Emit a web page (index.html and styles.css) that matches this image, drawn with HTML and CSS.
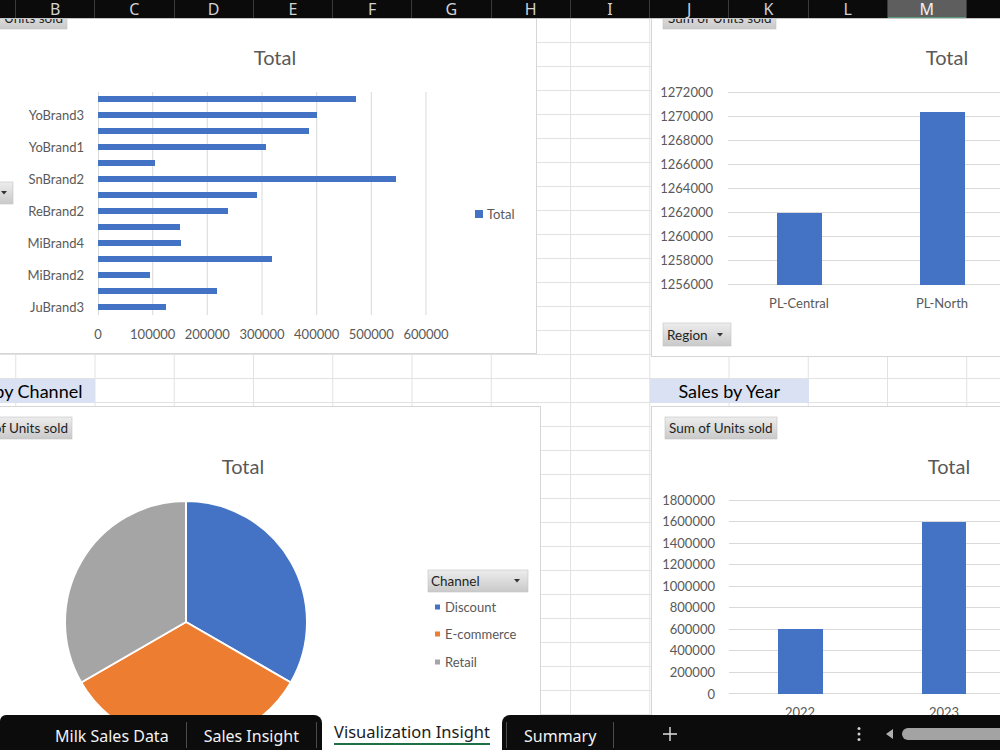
FILE: index.html
```html
<!DOCTYPE html>
<html lang="en">

<head>
    <title>Visualization Insight</title>
    <meta name="viewport" content="width=device-width, initial-scale=1" />
    <link rel="stylesheet" href="styles.css">
</head>

<body>
    <!-- shared paint for the pivot field buttons -->
    <svg class="defs" width="0" height="0">
        <defs>
            <linearGradient id="btnFill" x1="0" y1="0" x2="0" y2="1">
                <stop offset="0" stop-color="#ededed" />
                <stop offset="1" stop-color="#c9c9c9" />
            </linearGradient>
        </defs>
    </svg>

    <div class="workbook">
        <div class="col-header">
            <div class="col">A</div>
            <div class="col">B</div>
            <div class="col">C</div>
            <div class="col">D</div>
            <div class="col">E</div>
            <div class="col">F</div>
            <div class="col">G</div>
            <div class="col">H</div>
            <div class="col">I</div>
            <div class="col">J</div>
            <div class="col">K</div>
            <div class="col">L</div>
            <div class="col active">M</div>
            <div class="col">N</div>
        </div>

        <div class="sheet">
            <div class="heading channel">Sales by Channel</div>
            <div class="heading year">Sales by Year</div>

            <!-- units sold by brand -->
            <div class="chart chart-brand">
                <svg viewBox="-49 -10 585 363">
                    <rect class="field-btn" x="-40" y="7" width="107" height="22" />
                    <text class="field" x="63" y="23" text-anchor="end">Sum of Units sold</text>
                    <text class="title" x="275" y="65" text-anchor="middle">Total</text>

                    <g class="grid-line">
                        <line x1="98.5" y1="92" x2="98.5" y2="315" />
                        <line x1="152.7" y1="92" x2="152.7" y2="315" />
                        <line x1="207.3" y1="92" x2="207.3" y2="315" />
                        <line x1="262" y1="92" x2="262" y2="315" />
                        <line x1="316.7" y1="92" x2="316.7" y2="315" />
                        <line x1="371.3" y1="92" x2="371.3" y2="315" />
                        <line x1="426" y1="92" x2="426" y2="315" />
                    </g>

                    <g class="bar">
                        <rect x="98" y="96" width="258" height="6" />
                        <rect x="98" y="112" width="219" height="6" />
                        <rect x="98" y="128" width="211" height="6" />
                        <rect x="98" y="144" width="168" height="6" />
                        <rect x="98" y="160" width="57" height="6" />
                        <rect x="98" y="176" width="298" height="6" />
                        <rect x="98" y="192" width="159" height="6" />
                        <rect x="98" y="208" width="130" height="6" />
                        <rect x="98" y="224" width="82" height="6" />
                        <rect x="98" y="240" width="83" height="6" />
                        <rect x="98" y="256" width="174" height="6" />
                        <rect x="98" y="272" width="52" height="6" />
                        <rect x="98" y="288" width="119" height="6" />
                        <rect x="98" y="304" width="68" height="6" />
                    </g>

                    <g text-anchor="end">
                        <text x="84" y="119.5">YoBrand3</text>
                        <text x="84" y="151.5">YoBrand1</text>
                        <text x="84" y="183.5">SnBrand2</text>
                        <text x="84" y="215.5">ReBrand2</text>
                        <text x="84" y="247.5">MiBrand4</text>
                        <text x="84" y="279.5">MiBrand2</text>
                        <text x="84" y="311.5">JuBrand3</text>
                    </g>

                    <g text-anchor="middle">
                        <text x="98" y="339">0</text>
                        <text x="152.7" y="339">100000</text>
                        <text x="207.3" y="339">200000</text>
                        <text x="262" y="339">300000</text>
                        <text x="316.7" y="339">400000</text>
                        <text x="371.3" y="339">500000</text>
                        <text x="426" y="339">600000</text>
                    </g>

                    <rect class="bar" x="475" y="210" width="8" height="8" />
                    <text x="487" y="219">Total</text>

                    <rect class="field-btn" x="-40" y="182" width="53" height="22" />
                    <path class="arrow" d="M1 191 h6 l-3 3.5 z" />
                </svg>
            </div>

            <!-- units sold by region -->
            <div class="chart chart-region">
                <svg viewBox="652 -10 398 366">
                    <rect class="field-btn" x="663" y="7" width="113" height="22" />
                    <text class="field" x="668" y="23">Sum of Units sold</text>
                    <text class="title" x="947" y="65" text-anchor="middle">Total</text>

                    <g class="grid-line">
                        <line x1="728" y1="92.5" x2="1050" y2="92.5" />
                        <line x1="728" y1="116.5" x2="1050" y2="116.5" />
                        <line x1="728" y1="140.5" x2="1050" y2="140.5" />
                        <line x1="728" y1="164.5" x2="1050" y2="164.5" />
                        <line x1="728" y1="188.5" x2="1050" y2="188.5" />
                        <line x1="728" y1="212.5" x2="1050" y2="212.5" />
                        <line x1="728" y1="236.5" x2="1050" y2="236.5" />
                        <line x1="728" y1="260.5" x2="1050" y2="260.5" />
                        <line x1="728" y1="284.5" x2="1050" y2="284.5" />
                    </g>

                    <g text-anchor="end">
                        <text x="713" y="97">1272000</text>
                        <text x="713" y="121">1270000</text>
                        <text x="713" y="145">1268000</text>
                        <text x="713" y="169">1266000</text>
                        <text x="713" y="193">1264000</text>
                        <text x="713" y="217">1262000</text>
                        <text x="713" y="241">1260000</text>
                        <text x="713" y="265">1258000</text>
                        <text x="713" y="289">1256000</text>
                    </g>

                    <g class="bar">
                        <rect x="777" y="213" width="45" height="72" />
                        <rect x="920" y="112" width="45" height="173" />
                    </g>

                    <g text-anchor="middle">
                        <text x="799" y="308">PL-Central</text>
                        <text x="942" y="308">PL-North</text>
                    </g>

                    <rect class="field-btn" x="663" y="323" width="68" height="23" />
                    <text class="field" x="667" y="339.5">Region</text>
                    <path class="arrow" d="M717 333 h6 l-3 3.5 z" />
                </svg>
            </div>

            <!-- units sold by channel -->
            <div class="chart chart-channel">
                <svg viewBox="-49 407 589 392">
                    <rect class="field-btn" x="-40" y="417" width="112" height="22" />
                    <text class="field" x="68" y="433" text-anchor="end">Sum of Units sold</text>
                    <text class="title" x="243" y="474" text-anchor="middle">Total</text>

                    <g class="slice">
                        <path d="M186 622 L186 501 A121 121 0 0 1 290.8 682.5 Z" fill="#4472c4" />
                        <path d="M186 622 L290.8 682.5 A121 121 0 0 1 81.2 682.5 Z" fill="#ed7d31" />
                        <path d="M186 622 L81.2 682.5 A121 121 0 0 1 186 501 Z" fill="#a5a5a5" />
                    </g>

                    <rect class="field-btn" x="428" y="570" width="100" height="22" />
                    <text class="field" x="431" y="586">Channel</text>
                    <path class="arrow" d="M514 579 h6 l-3 3.5 z" />

                    <rect x="435" y="604.5" width="5" height="5" fill="#4472c4" />
                    <text x="445" y="611.5">Discount</text>
                    <rect x="435" y="631.5" width="5" height="5" fill="#ed7d31" />
                    <text x="445" y="638.5">E-commerce</text>
                    <rect x="435" y="659.5" width="5" height="5" fill="#a5a5a5" />
                    <text x="445" y="666.5">Retail</text>
                </svg>
            </div>

            <!-- units sold by year -->
            <div class="chart chart-year">
                <svg viewBox="652 407 398 392">
                    <rect class="field-btn" x="665" y="417" width="112" height="22" />
                    <text class="field" x="669" y="433">Sum of Units sold</text>
                    <text class="title" x="949" y="474" text-anchor="middle">Total</text>

                    <g class="grid-line">
                        <line x1="729" y1="500.5" x2="1050" y2="500.5" />
                        <line x1="729" y1="521.5" x2="1050" y2="521.5" />
                        <line x1="729" y1="543.5" x2="1050" y2="543.5" />
                        <line x1="729" y1="564.5" x2="1050" y2="564.5" />
                        <line x1="729" y1="586.5" x2="1050" y2="586.5" />
                        <line x1="729" y1="607.5" x2="1050" y2="607.5" />
                        <line x1="729" y1="629.5" x2="1050" y2="629.5" />
                        <line x1="729" y1="650.5" x2="1050" y2="650.5" />
                        <line x1="729" y1="672.5" x2="1050" y2="672.5" />
                        <line x1="729" y1="693.5" x2="1050" y2="693.5" />
                    </g>

                    <g text-anchor="end">
                        <text x="715" y="504.5">1800000</text>
                        <text x="715" y="526">1600000</text>
                        <text x="715" y="547.5">1400000</text>
                        <text x="715" y="569">1200000</text>
                        <text x="715" y="590.5">1000000</text>
                        <text x="715" y="612">800000</text>
                        <text x="715" y="633.5">600000</text>
                        <text x="715" y="655">400000</text>
                        <text x="715" y="676.5">200000</text>
                        <text x="715" y="698.5">0</text>
                    </g>

                    <g class="bar">
                        <rect x="778" y="629" width="45" height="65" />
                        <rect x="922" y="522" width="44" height="172" />
                    </g>

                    <g text-anchor="middle">
                        <text x="800" y="717">2022</text>
                        <text x="944" y="717">2023</text>
                    </g>
                </svg>
            </div>
        </div>

        <div class="sheet-tabs">
            <div class="tabs-left">
                <div class="tab">Milk Sales Data</div>
                <div class="tab-sep"></div>
                <div class="tab">Sales Insight</div>
                <div class="tab-sep"></div>
            </div>
            <div class="tab-active"><span>Visualization Insight</span></div>
            <div class="tabs-right">
                <div class="tab-sep"></div>
                <div class="tab">Summary</div>
                <div class="tab-sep"></div>
                <svg class="add-sheet" width="16" height="16" viewBox="0 0 16 16">
                    <path d="M8 1v14M1 8h14" stroke="#e0e0e0" stroke-width="1.4" />
                </svg>
                <div class="spacer"></div>
                <svg class="more" width="10" height="16" viewBox="0 0 10 16">
                    <circle cx="5" cy="2.5" r="1.5" fill="#d0d0d0" />
                    <circle cx="5" cy="8" r="1.5" fill="#d0d0d0" />
                    <circle cx="5" cy="13.5" r="1.5" fill="#d0d0d0" />
                </svg>
                <svg class="scroll-left" width="8" height="10" viewBox="0 0 8 10">
                    <path d="M7 0v10L0 5z" fill="#b0b0b0" />
                </svg>
                <div class="scroll-thumb"></div>
            </div>
        </div>
    </div>
</body>

</html>
```

FILE: styles.css
```css
* {
    box-sizing: border-box;
}

body {
    margin: 0;
    width: 1000px;
    height: 750px;
    overflow: hidden;
    background: #fff;
    font-family: Lato, "Liberation Sans", sans-serif;
}

.defs {
    position: absolute;
}

.workbook {
    display: flex;
    flex-direction: column;
    height: 750px;
}

/* column letters, column A starts off the left edge */
.col-header {
    flex: none;
    display: grid;
    grid-template-columns: repeat(14, 79.25px);
    height: 19px;
    margin-left: -63.25px;
    background: #0b0b0b;
    border-bottom: 1px solid #c6c6c6;
}

.col {
    color: #d2d2d2;
    font-family: "Noto Sans", sans-serif;
    font-size: 16px;
    line-height: 18px;
    text-align: center;
    border-right: 1px solid #3a3a3a;
}

.col.active {
    background: #5e5e5e;
    color: #f0f0f0;
    box-shadow: inset 0 -1px 0 #5b9a78;
}

/* cell grid */
.sheet {
    position: relative;
    flex: 1;
    margin-left: -63.25px;
    overflow: hidden;
    display: grid;
    grid-template-columns: repeat(14, 79.25px);
    grid-template-rows: repeat(29, 24px);
    align-content: start;
    background-image:
        linear-gradient(to left, #e2e2e2 1px, transparent 1px),
        linear-gradient(to top, #e2e2e2 1px, transparent 1px);
    background-size: 79.25px 100%, 100% 24px;
}

.heading {
    grid-row: 16;
    background: #d9e1f2;
    color: #000;
    font-size: 18px;
    line-height: 24px;
    text-align: center;
    white-space: nowrap;
}

.heading.channel {
    grid-column: 1 / 3;
}

.heading.year {
    grid-column: 10 / 12;
}

/* pivot charts float over the cells */
.chart {
    position: absolute;
    background: #fff;
    border: 1px solid #d6d6d6;
}

.chart svg {
    display: block;
    width: 100%;
    height: 100%;
}

.chart-brand {
    left: 13.25px;
    top: -30px;
    width: 587px;
    height: 365px;
}

.chart-region {
    left: 714.25px;
    top: -30px;
    width: 400px;
    height: 368px;
}

.chart-channel {
    left: 13.25px;
    top: 387px;
    width: 591px;
    height: 394px;
}

.chart-year {
    left: 714.25px;
    top: 387px;
    width: 400px;
    height: 394px;
}

.chart text {
    font-family: Lato, sans-serif;
    font-size: 13px;
    fill: #595959;
}

.chart .title {
    font-size: 20px;
}

.chart .field {
    font-size: 13.5px;
    fill: #1f1f1f;
}

.field-btn {
    fill: url(#btnFill);
    stroke: #c2c2c2;
    stroke-width: 0.6;
}

.arrow {
    fill: #333;
}

.grid-line {
    stroke: #d9d9d9;
    stroke-width: 1;
}

.bar {
    fill: #4472c4;
}

.slice path {
    stroke: #fff;
    stroke-width: 2;
}

/* sheet tabs */
.sheet-tabs {
    flex: none;
    display: flex;
    height: 35px;
    background: #fff;
    font-family: "Noto Sans", sans-serif;
    font-size: 16px;
}

.tabs-left {
    display: flex;
    width: 322px;
    padding-left: 38px;
    background: #0c0c0c;
    border-radius: 6px 8px 0 0;
}

.tabs-right {
    flex: 1;
    display: flex;
    align-items: center;
    padding-left: 4px;
    background: #0c0c0c;
    border-top-left-radius: 8px;
}

.tab {
    display: flex;
    align-items: center;
    align-self: stretch;
    padding: 6px 17px 0;
    color: #f2f2f2;
    white-space: nowrap;
}

.tab-sep {
    align-self: stretch;
    width: 1px;
    margin: 7px 0 2px;
    background: #4b4b4b;
}

.tab-active {
    display: flex;
    align-items: center;
    justify-content: center;
    width: 180px;
    color: #1b1b1b;
    font-size: 16.5px;
}

.tab-active span {
    line-height: 22px;
    border-bottom: 2px solid #1e7145;
}

.add-sheet {
    margin: 3px 0 0 48px;
}

.spacer {
    flex: 1;
}

.more {
    margin: 3px 22px 0 0;
}

.scroll-left {
    margin: 2px 8px 0 0;
}

.scroll-thumb {
    flex: none;
    width: 110px;
    height: 12px;
    margin: 3px -12px 0 0;
    border-radius: 6px;
    background: #a3a3a3;
}
```
